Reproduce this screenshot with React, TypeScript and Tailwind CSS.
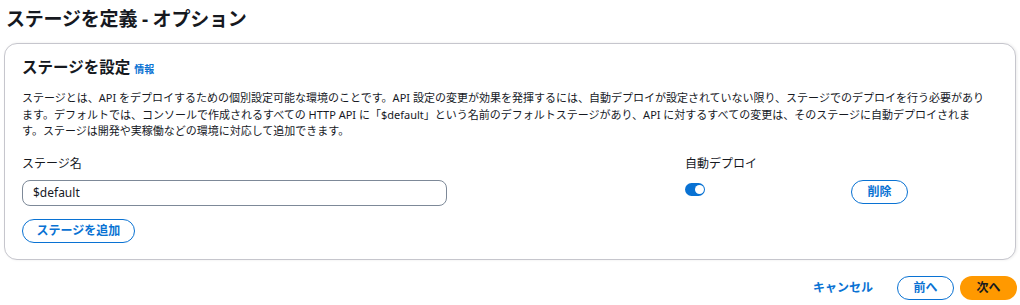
import { useState } from 'react'

const font = { fontFamily: '"Noto Sans", "Noto Sans CJK JP", sans-serif' }

export default function App() {
  const [stage, setStage] = useState('$default')
  const [autoDeploy, setAutoDeploy] = useState(true)

  const outlineBtn =
    'h-[24px] rounded-full border border-[#0972d3] bg-white text-[12px] font-bold text-[#0972d3] leading-none flex items-center justify-center'

  return (
    <div className="w-[1020px] h-[305px] bg-white text-[#16191f] overflow-hidden" style={font}>
      <h1 className="pl-[6px] pt-[7px] h-[43px] text-[19px] font-bold leading-[24px] tracking-[-0.2px]">
        ステージを定義 - オプション
      </h1>

      <div className="mx-[4px] w-[1012px] h-[217px] rounded-[13px] border border-[#c6c6cd] bg-white pl-[17px] pr-[8px] pt-[11px] shadow-[1px_0_3px_rgba(0,0,0,0.08)]">
        <div className="flex items-baseline gap-[4px]">
          <h2 className="text-[15.5px] font-bold leading-[24px]">ステージを設定</h2>
          <a className="text-[10px] font-bold text-[#0972d3]">情報</a>
        </div>

        {/* line breaks placed where the console wraps this text */}
        <p className="mt-[11px] text-[11px] leading-[16.5px]">
          ステージとは、API をデプロイするための個別設定可能な環境のことです。API 設定の変更が効果を発揮するには、自動デプロイが設定されていない限り、ステージでのデプロイを行う必要があり
          <br />
          ます。デフォルトでは、コンソールで作成されるすべての HTTP API に「$default」という名前のデフォルトステージがあり、API に対するすべての変更は、そのステージに自動デプロイされま
          <br />
          す。ステージは開発や実稼働などの環境に対応して追加できます。
        </p>

        <div className="mt-[15px] grid grid-cols-[663px_166px_auto]">
          <div>
            <label className="block text-[12px] leading-[18px]">ステージ名</label>
            <input
              value={stage}
              onChange={(e) => setStage(e.target.value)}
              className="mt-[7px] block w-[425px] h-[26px] rounded-[8px] border border-[#7d8998] px-[10px] text-[12px] outline-none"
            />
            <button type="button" className={outlineBtn + ' mt-[13px] w-[113px]'}>
              ステージを追加
            </button>
          </div>
          <div>
            <div className="text-[12px] leading-[18px]">自動デプロイ</div>
            <button
              type="button"
              onClick={() => setAutoDeploy(!autoDeploy)}
              className={
                'mt-[10px] flex h-[13px] w-[20px] items-center rounded-full px-[1.5px] ' +
                (autoDeploy ? 'bg-[#0972d3] justify-end' : 'bg-[#8c8c94] justify-start')
              }
              aria-label="自動デプロイ"
            >
              <span className="block h-[9px] w-[9px] rounded-full bg-white" />
            </button>
          </div>
          <div className="pt-[25px]">
            <button type="button" className={outlineBtn + ' w-[57px]'}>
              削除
            </button>
          </div>
        </div>
      </div>

      <div className="mt-[16px] flex items-center justify-end pr-[3px]">
        <button type="button" className="text-[12px] font-bold text-[#0972d3] mr-[24px]">
          キャンセル
        </button>
        <button type="button" className={outlineBtn + ' w-[57px] mr-[6px]'}>
          前へ
        </button>
        <button
          type="button"
          className="h-[24px] w-[57px] rounded-full bg-[#ff9900] text-[12px] font-bold text-[#16191f] leading-none"
        >
          次へ
        </button>
      </div>
    </div>
  )
}
